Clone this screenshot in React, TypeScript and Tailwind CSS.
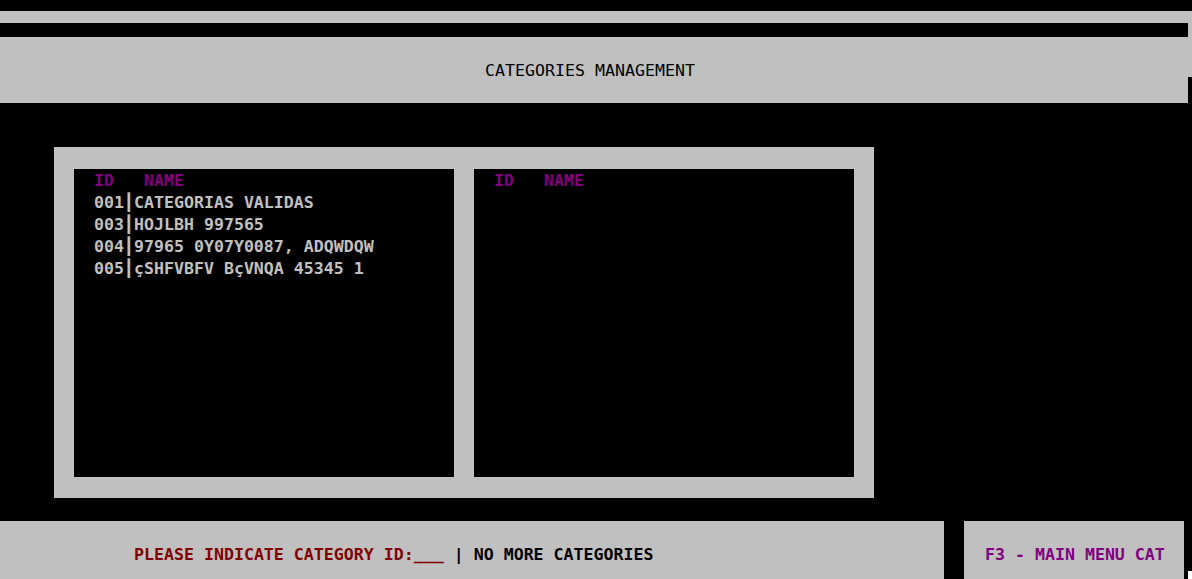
const mono = "font-['DejaVu_Sans_Mono','Liberation_Mono',monospace] text-[16.6px] leading-[22px]";

const rows = [
  { id: '001', name: 'CATEGORIAS VALIDAS' },
  { id: '003', name: 'HOJLBH 997565' },
  { id: '004', name: '97965 0Y07Y0087, ADQWDQW' },
  { id: '005', name: 'çSHFVBFV BçVNQA 45345 1' },
];

function ListPane({ items }: { items: typeof rows }) {
  return (
    <div className={`w-[380px] h-full bg-black pl-[20px] pt-[1px] ${mono} font-bold whitespace-pre`}>
      <div className="text-[#800080]">{'ID   NAME'}</div>
      {items.map((r) => (
        <div key={r.id} className="text-[#c0c0c0]">
          {r.id}
          <span>┃</span>
          {r.name}
        </div>
      ))}
    </div>
  );
}

export default function App() {
  return (
    <div className="w-[1192px] h-[579px] bg-black overflow-hidden flex flex-col">
      <div className="h-[11px] shrink-0" />
      <div className="h-[12px] shrink-0 bg-[#c0c0c0]" />
      <div className="h-[14px] shrink-0 flex">
        <div className="flex-1 bg-black" />
        <div className="w-[4px] bg-[#c0c0c0]" />
      </div>

      {/* title bar */}
      <div className="h-[66px] shrink-0 flex">
        <div className={`flex-1 bg-[#c0c0c0] flex items-center justify-center pr-[8px] pt-[2px] ${mono} text-black whitespace-pre`}>
          CATEGORIES MANAGEMENT
        </div>
        <div className="w-[4px] flex flex-col">
          <div className="h-[40px] bg-[#c0c0c0]" />
          <div className="flex-1 bg-black" />
        </div>
      </div>

      <div className="h-[44px] shrink-0" />

      {/* lists */}
      <div className="ml-[54px] w-[820px] h-[351px] shrink-0 bg-[#c0c0c0] pt-[22px] pb-[21px] px-[20px] flex gap-[20px]">
        <ListPane items={rows} />
        <ListPane items={[]} />
      </div>

      <div className="h-[23px] shrink-0" />

      {/* footer */}
      <div className="h-[58px] shrink-0 flex">
        <div className={`w-[944px] bg-[#c0c0c0] pt-[23px] pl-[134px] ${mono} font-bold whitespace-pre`}>
          <span className="text-[#800000]">PLEASE INDICATE CATEGORY ID:___</span>
          <span className="text-black"> | NO MORE CATEGORIES</span>
        </div>
        <div className="w-[20px]" />
        <div className={`w-[220px] bg-[#c0c0c0] pt-[23px] pl-[21px] ${mono} font-bold text-[#800080] whitespace-pre`}>
          F3 - MAIN MENU CAT
        </div>
        <div className="flex-1 flex flex-col justify-end">
          <div className="ml-[4px] w-[4px] h-[8px] bg-white" />
        </div>
      </div>
    </div>
  );
}
